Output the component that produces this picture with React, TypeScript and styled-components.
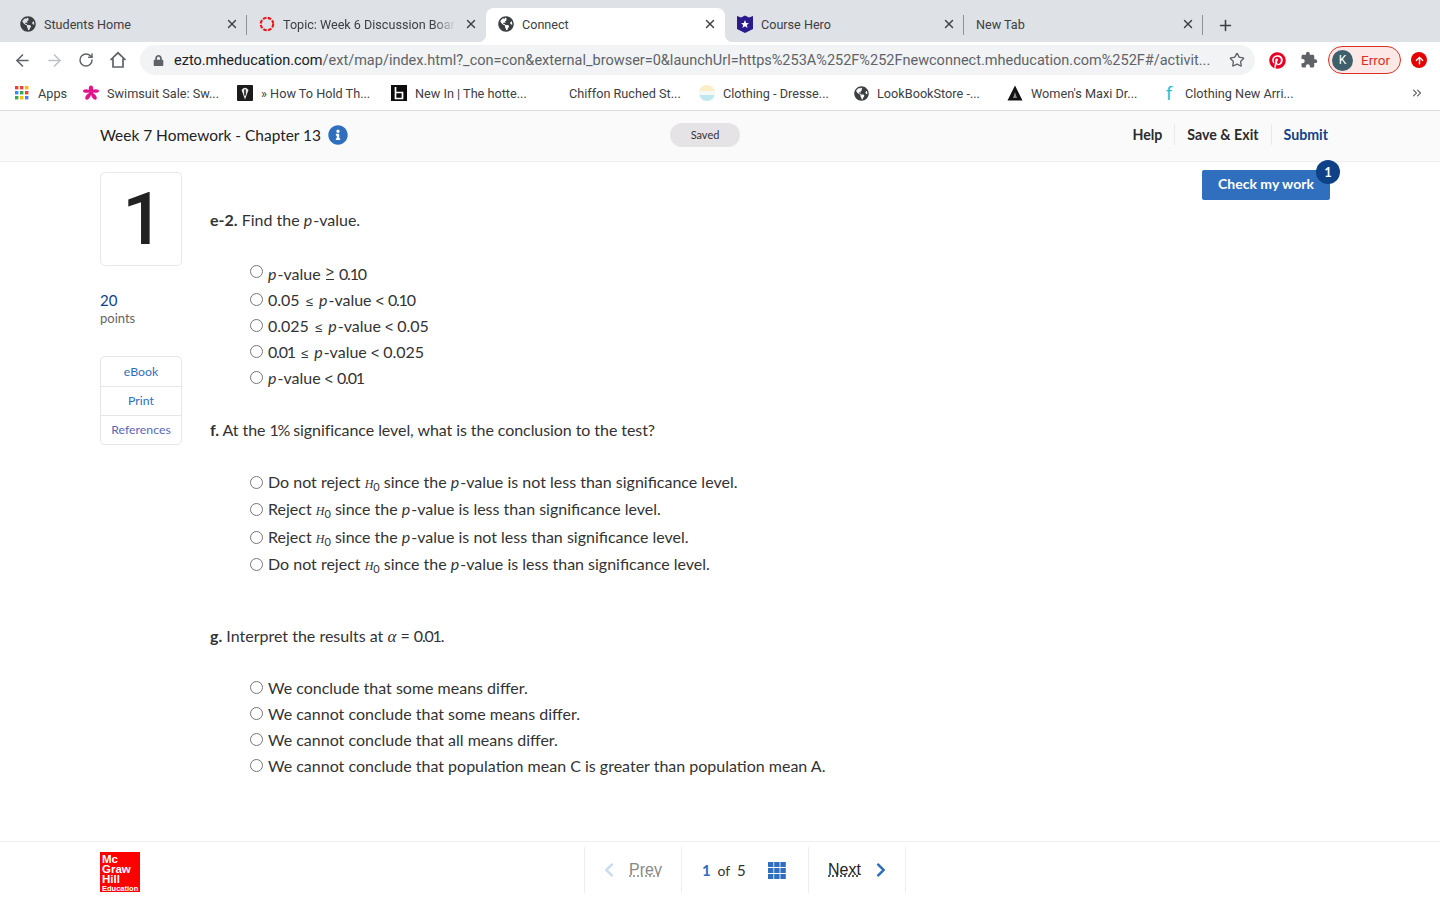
import React from 'react';
import styled, { createGlobalStyle } from 'styled-components';
import { ArrowLeft, ArrowRight, RotateCw, Star, X, Plus, ChevronsRight } from 'lucide-react';
import { FaGlobeAmericas, FaPinterest, FaLock, FaInfoCircle, FaChevronLeft, FaChevronRight, FaArrowUp } from 'react-icons/fa';
import { MdExtension } from 'react-icons/md';

const BODY_FONT = '"Lato", "Open Sans", sans-serif';
const CHROME_FONT = 'Roboto, "Liberation Sans", sans-serif';

const GlobalStyle = createGlobalStyle`
  html, body { margin: 0; padding: 0; background: #fff; overflow: hidden; }
  * { box-sizing: border-box; }
`;

// icons
function DashedRing() {
  return (
    <svg width="18" height="18" viewBox="0 0 18 18">
      <circle cx="9" cy="9" r="7" fill="none" stroke="#e8141c" strokeWidth="2.4" strokeDasharray="4 1.5" />
    </svg>
  );
}

function HeroShield() {
  return (
    <svg width="16" height="18" viewBox="0 0 16 18">
      <path d="M0 1 L4 2.5 L8 0.5 L12 2.5 L16 1 V14 L8 18 L0 14 Z" fill="#2a1a8c" />
      <path d="M8 5 L9.2 8 L12 8.2 L9.8 10 L10.6 13 L8 11.3 L5.4 13 L6.2 10 L4 8.2 L6.8 8 Z" fill="#fff" />
    </svg>
  );
}

function HomeOutline() {
  return (
    <svg width="18" height="18" viewBox="0 0 18 18" fill="none" stroke="#5f6368" strokeWidth="1.7">
      <path d="M1.5 9 L9 1.8 L16.5 9 M4 7.5 V16 H14 V7.5" />
    </svg>
  );
}

function AppsDots() {
  const colors = ['#ea4335', '#ea4335', '#fbbc04', '#4285f4', '#34a853', '#ea4335', '#34a853', '#fbbc04', '#4285f4'];
  return (
    <svg width="14" height="14" viewBox="0 0 14 14">
      {colors.map((color, i) => (
        <rect key={i} x={(i % 3) * 5} y={Math.floor(i / 3) * 5} width="3.4" height="3.4" fill={color} />
      ))}
    </svg>
  );
}

function PinkFlower() {
  return (
    <svg width="16" height="16" viewBox="0 0 16 16" fill="#e0148c">
      <ellipse cx="8" cy="4" rx="2.2" ry="3.4" />
      <ellipse cx="3.4" cy="6" rx="3.4" ry="1.8" />
      <ellipse cx="12.6" cy="6" rx="3.4" ry="1.8" />
      <ellipse cx="5" cy="11.5" rx="2" ry="3.6" transform="rotate(35 5 11.5)" />
      <ellipse cx="11" cy="11.5" rx="2" ry="3.6" transform="rotate(-35 11 11.5)" />
      <circle cx="8" cy="8" r="2.4" />
    </svg>
  );
}

function DarkBadge() {
  return (
    <svg width="16" height="16" viewBox="0 0 16 16">
      <rect width="16" height="16" rx="1" fill="#1b1b1b" />
      <path d="M4.5 5 Q8 0.5 11.5 5 L8 14.5 Z" fill="#e8e8e8" />
      <path d="M8 4.5 V10.5" stroke="#1b1b1b" strokeWidth="1.6" />
    </svg>
  );
}

function BlackB() {
  return (
    <svg width="16" height="16" viewBox="0 0 16 16">
      <rect width="16" height="16" fill="#0c0c0c" />
      <path d="M4.5 2 V13.5 H11.5 V7.5 H4.5" fill="none" stroke="#fff" strokeWidth="1.7" />
    </svg>
  );
}

function PastelDisc() {
  return (
    <svg width="16" height="16" viewBox="0 0 16 16">
      <clipPath id="disc">
        <circle cx="8" cy="8" r="8" />
      </clipPath>
      <g clipPath="url(#disc)">
        <rect width="16" height="6" fill="#fbeec6" />
        <rect y="6" width="16" height="4" fill="#f4f8f6" />
        <rect y="10" width="16" height="6" fill="#bfe8ee" />
      </g>
    </svg>
  );
}

function BlackTriangle() {
  return (
    <svg width="16" height="16" viewBox="0 0 16 16">
      <path d="M8 0.5 L15.5 15.5 H0.5 Z" fill="#111" />
      <path d="M8 7 L10 13 H6 Z" fill="#888" />
    </svg>
  );
}

function CyanMark() {
  return <CyanF>f</CyanF>;
}

function GridGlyph() {
  return (
    <svg width="18" height="17" viewBox="0 0 18 17" fill="#2f6fbd">
      {[0, 6, 12].flatMap((y) =>
        [0, 6.2, 12.4].map((x) => <rect key={`${x}-${y}`} x={x} y={y} width="5.4" height="5" />),
      )}
    </svg>
  );
}

// data
const TABS = [
  { title: 'Students Home', icon: <FaGlobeAmericas size={16} color="#3c4043" /> },
  { title: 'Topic: Week 6 Discussion Boar', icon: <DashedRing />, fade: true },
  { title: 'Connect', icon: <FaGlobeAmericas size={16} color="#3c4043" />, active: true },
  { title: 'Course Hero', icon: <HeroShield /> },
  { title: 'New Tab', icon: null },
];

const BOOKMARKS = [
  { title: 'Swimsuit Sale: Sw...', icon: <PinkFlower /> },
  { title: '» How To Hold Th...', icon: <DarkBadge /> },
  { title: 'New In | The hotte...', icon: <BlackB /> },
  { title: 'Chiffon Ruched St...', icon: null },
  { title: 'Clothing - Dresse...', icon: <PastelDisc /> },
  { title: 'LookBookStore -...', icon: <FaGlobeAmericas size={15} color="#3c4043" /> },
  { title: "Women's Maxi Dr...", icon: <BlackTriangle /> },
  { title: 'Clothing New Arri...', icon: <CyanMark /> },
];

function PVal() {
  return (
    <>
      <Italic>p</Italic>-value
    </>
  );
}

function H0() {
  return (
    <HNull>
      <i>H</i>
      <sub>0</sub>
    </HNull>
  );
}

function App() {
  return (
    <Page>
      <GlobalStyle />
      <TabStrip>
        {TABS.map((tab, i) => (
          <Tab key={tab.title} $active={tab.active} $divider={i !== 2 && i !== 1}>
            {tab.icon && <TabIcon>{tab.icon}</TabIcon>}
            <TabTitle $fade={tab.fade}>{tab.title}</TabTitle>
            <X size={14} strokeWidth={2.4} color="#3c4043" />
          </Tab>
        ))}
        <NewTabButton>
          <Plus size={17} strokeWidth={2.2} color="#3c4043" />
        </NewTabButton>
      </TabStrip>

      <Toolbar>
        <NavButtons>
          <ArrowLeft size={19} color="#5f6368" />
          <ArrowRight size={19} color="#bdc1c6" />
          <RotateCw size={16} color="#5f6368" strokeWidth={2.2} />
          <HomeOutline />
        </NavButtons>
        <AddressBar>
          <FaLock size={11} color="#5f6368" />
          <Url>
            <strong>ezto.mheducation.com</strong>/ext/map/index.html?_con=con&amp;external_browser=0&amp;launchUrl=https%253A%252F%252Fnewconnect.mheducation.com%252F#/activit...
          </Url>
          <Star size={16} color="#5f6368" />
        </AddressBar>
        <ExtensionRow>
          <FaPinterest size={17} color="#e60023" />
          <MdExtension size={18} color="#5f6368" />
          <ProfilePill>
            <Avatar>K</Avatar>
            Error
          </ProfilePill>
          <UploadDot>
            <FaArrowUp size={9} color="#fff" />
          </UploadDot>
        </ExtensionRow>
      </Toolbar>

      <BookmarkBar>
        <Bookmark $width={69}>
          <BookmarkIcon>
            <AppsDots />
          </BookmarkIcon>
          Apps
        </Bookmark>
        {BOOKMARKS.map((bookmark) => (
          <Bookmark key={bookmark.title} $width={154}>
            <BookmarkIcon>{bookmark.icon}</BookmarkIcon>
            {bookmark.title}
          </Bookmark>
        ))}
        <MoreBookmarks>
          <ChevronsRight size={14} color="#5f6368" />
        </MoreBookmarks>
      </BookmarkBar>

      <AssignmentHeader>
        <AssignmentTitle>
          Week 7 Homework - Chapter 13
          <FaInfoCircle size={20} color="#2f6fbd" />
        </AssignmentTitle>
        <SavedPill>Saved</SavedPill>
        <HeaderNav>
          <HeaderLink>Help</HeaderLink>
          <HeaderLink>Save &amp; Exit</HeaderLink>
          <HeaderLink $primary>Submit</HeaderLink>
        </HeaderNav>
      </AssignmentHeader>

      <Main>
        <Sidebar>
          <NumberCard>1</NumberCard>
          <Points>20</Points>
          <PointsLabel>points</PointsLabel>
          <ToolLinks>
            <ToolLink>eBook</ToolLink>
            <ToolLink>Print</ToolLink>
            <ToolLink $purple>References</ToolLink>
          </ToolLinks>
        </Sidebar>

        <Question>
          <Prompt $top={35}>
            <b>e-2.</b> Find the <PVal />.
          </Prompt>
          <Options $top={28}>
            <Option>
              <Radio $raised />
              <span>
                <PVal /> <GeSign>&gt;</GeSign> <Tight>0.10</Tight>
              </span>
            </Option>
            <Option>
              <Radio />
              <span>0.05 <Compare>≤</Compare> <PVal /> <Less>&lt;</Less> <Tight>0.10</Tight></span>
            </Option>
            <Option>
              <Radio />
              <span>0.025 <Compare>≤</Compare> <PVal /> <Less>&lt;</Less> 0.05</span>
            </Option>
            <Option>
              <Radio />
              <span><Tight>0.01</Tight> <Compare>≤</Compare> <PVal /> <Less>&lt;</Less> 0.025</span>
            </Option>
            <Option>
              <Radio />
              <span><PVal /> <Less>&lt;</Less> <Tight>0.01</Tight></span>
            </Option>
          </Options>

          <Prompt $top={26} $spacing={-0.07}>
            <b>f.</b> At the <Tight>1%</Tight> significance level, what is the conclusion to the test?
          </Prompt>
          <Options $top={26}>
            <Option $height={27.5}>
              <Radio />
              <span>Do not reject <H0 /> since the <PVal /> is not less than significance level.</span>
            </Option>
            <Option $height={27.5}>
              <Radio />
              <span>Reject <H0 /> since the <PVal /> is less than significance level.</span>
            </Option>
            <Option $height={27.5}>
              <Radio />
              <span>Reject <H0 /> since the <PVal /> is not less than significance level.</span>
            </Option>
            <Option $height={27.5}>
              <Radio />
              <span>Do not reject <H0 /> since the <PVal /> is less than significance level.</span>
            </Option>
          </Options>

          <Prompt $top={44}>
            <b>g.</b> Interpret the results at <Alpha>α</Alpha> = <Tight>0.01</Tight>.
          </Prompt>
          <Options $top={26}>
            <Option>
              <Radio />
              <span>We conclude that some means differ.</span>
            </Option>
            <Option>
              <Radio />
              <span>We cannot conclude that some means differ.</span>
            </Option>
            <Option>
              <Radio />
              <span>We cannot conclude that all means differ.</span>
            </Option>
            <Option>
              <Radio />
              <span>We cannot conclude that population mean C is greater than population mean A.</span>
            </Option>
          </Options>
        </Question>

        <CheckButton>
          Check my work
          <CheckBadge>1</CheckBadge>
        </CheckButton>
      </Main>

      <Footer>
        <Logo>
          Mc
          <br />
          Graw
          <br />
          Hill
          <LogoSmall>Education</LogoSmall>
        </Logo>
        <Pager>
          <PagerCell $width={97} $inset={16} $gap={12}>
            <FaChevronLeft size={16} color="#c9dcef" />
            <PagerLink $muted>Prev</PagerLink>
          </PagerCell>
          <PagerCell $width={127} $inset={20} $gap={22}>
            <PageCount>
              <b>1</b> <small>of</small> 5
            </PageCount>
            <GridGlyph />
          </PagerCell>
          <PagerCell $width={97} $inset={19} $gap={12}>
            <PagerLink>Next</PagerLink>
            <FaChevronRight size={16} color="#2f6fbd" />
          </PagerCell>
        </Pager>
      </Footer>
    </Page>
  );
}

const Page = styled.div`
  height: 900px;
  display: flex;
  flex-direction: column;
  font-family: ${BODY_FONT};
  color: #333;
`;

const TabStrip = styled.div`
  height: 42px;
  padding: 8px 0 0 8px;
  display: flex;
  background: #dee1e6;
  font-family: ${CHROME_FONT};
`;

const Tab = styled.div<{ $active?: boolean; $divider?: boolean }>`
  width: 239px;
  height: 34px;
  padding: 0 8px 2px 12px;
  display: flex;
  align-items: center;
  gap: 8px;
  font-size: 12.6px;
  color: #3c4043;
  border-radius: 8px 8px 0 0;
  background: ${(p) => (p.$active ? '#fff' : 'transparent')};
  position: relative;

  &::before {
    content: '';
    display: ${(p) => (p.$active ? 'block' : 'none')};
    position: absolute;
    left: -8px;
    right: -8px;
    bottom: 0;
    height: 8px;
    z-index: 0;
    background:
      radial-gradient(circle at 0 0, #dee1e6 8px, #fff 8.5px) left / 8px 8px no-repeat,
      radial-gradient(circle at 100% 0, #dee1e6 8px, #fff 8.5px) right / 8px 8px no-repeat;
  }

  &::after {
    content: '';
    display: ${(p) => (p.$divider ? 'block' : 'none')};
    position: absolute;
    right: 0;
    top: 7px;
    height: 20px;
    width: 1px;
    background: #8f9296;
  }
`;

const TabIcon = styled.span`
  width: 16px;
  height: 18px;
  display: flex;
  align-items: center;
  justify-content: center;
`;

const TabTitle = styled.span<{ $fade?: boolean }>`
  flex: 1;
  white-space: nowrap;
  ${(p) => p.$fade && 'mask-image: linear-gradient(to right, #000 150px, transparent 173px);'}
`;

const NewTabButton = styled.div`
  width: 44px;
  height: 34px;
  display: flex;
  align-items: center;
  justify-content: center;
`;

const Toolbar = styled.div`
  height: 36px;
  display: flex;
  align-items: center;
  background: #fff;
  font-family: ${CHROME_FONT};
`;

const NavButtons = styled.div`
  width: 134px;
  padding-left: 6px;
  display: grid;
  grid-template-columns: repeat(4, 32px);
  justify-items: center;
  align-items: center;
`;

const AddressBar = styled.div`
  width: 1115px;
  height: 30px;
  margin-left: 6px;
  padding: 0 10px 0 13px;
  display: flex;
  align-items: center;
  background: #f1f3f4;
  border-radius: 15px;
`;

const Url = styled.div`
  flex: 1;
  margin-left: 10px;
  font-size: 14.5px;
  white-space: nowrap;
  overflow: hidden;
  color: #5f6368;

  strong {
    font-weight: 400;
    color: #202124;
  }
`;

const ExtensionRow = styled.div`
  margin-left: 14px;
  display: flex;
  align-items: center;
  gap: 14px;
`;

const ProfilePill = styled.div`
  width: 73px;
  height: 28px;
  margin-left: -4px;
  padding-left: 3px;
  display: flex;
  align-items: center;
  gap: 8px;
  color: #d93025;
  font-size: 13.5px;
  background: #fce8e6;
  border: 1px solid #d93025;
  border-radius: 14px;
`;

const Avatar = styled.span`
  width: 21px;
  height: 21px;
  display: flex;
  align-items: center;
  justify-content: center;
  border-radius: 50%;
  background: #3f5f6d;
  color: #fff;
  font-size: 12px;
`;

const UploadDot = styled.span`
  width: 16px;
  height: 16px;
  margin-left: -4px;
  display: flex;
  align-items: center;
  justify-content: center;
  border-radius: 50%;
  background: #e60000;
`;

const BookmarkBar = styled.div`
  height: 33px;
  padding: 0 0 2px 14px;
  display: flex;
  align-items: center;
  background: #fff;
  border-bottom: 1px solid #d8dadd;
  font-family: ${CHROME_FONT};
`;

const Bookmark = styled.div<{ $width: number }>`
  width: ${(p) => p.$width}px;
  display: flex;
  align-items: center;
  gap: 8px;
  font-size: 12.7px;
  color: #3c4043;
  white-space: nowrap;
`;

const BookmarkIcon = styled.span`
  width: 16px;
  height: 16px;
  display: flex;
  align-items: center;
  justify-content: center;
`;

const CyanF = styled.span`
  font: 400 19px Roboto, sans-serif;
  color: #1cc3d6;
`;

const MoreBookmarks = styled.div`
  margin-left: auto;
  margin-right: 16px;
  display: flex;
`;

const AssignmentHeader = styled.header`
  height: 51px;
  padding: 0 112px 3px 100px;
  display: grid;
  grid-template-columns: 570px 70px 1fr;
  align-items: center;
  background: #fafafa;
  border-bottom: 1px solid #eee;
`;

const AssignmentTitle = styled.h1`
  margin: 0;
  display: flex;
  align-items: center;
  gap: 7px;
  font-size: 15.45px;
  font-weight: 400;
  color: #222;
  white-space: nowrap;
`;

const SavedPill = styled.div`
  height: 24px;
  padding-bottom: 1px;
  display: flex;
  align-items: center;
  justify-content: center;
  font-size: 11px;
  color: #333;
  background: #e6e3e6;
  border-radius: 12px;
`;

const HeaderNav = styled.nav`
  display: flex;
  justify-content: flex-end;
`;

const HeaderLink = styled.a<{ $primary?: boolean }>`
  padding: 2px 12px;
  font-size: 14.2px;
  font-weight: 700;
  color: ${(p) => (p.$primary ? '#12418a' : '#2b2b2b')};
  border-left: 1px solid #eaeaea;

  &:first-child {
    border-left: 0;
  }

  &:last-child {
    padding-right: 0;
  }
`;

const Main = styled.main`
  flex: 1;
  padding: 10px 110px 0 100px;
  display: flex;
  align-items: flex-start;
  background: #fff;
`;

const Sidebar = styled.aside`
  width: 82px;
  margin-right: 28px;
  flex-shrink: 0;
`;

const NumberCard = styled.div`
  height: 94px;
  padding-left: 4px;
  display: flex;
  align-items: center;
  justify-content: center;
  font-family: Roboto, sans-serif;
  font-size: 73px;
  font-weight: 500;
  color: #222;
  border: 1px solid #e8e8e8;
  border-radius: 5px;
`;

const Points = styled.div`
  margin-top: 25px;
  font-size: 15px;
  line-height: 18px;
  color: #12418a;
`;

const PointsLabel = styled.div`
  margin-top: 1px;
  font-size: 13px;
  line-height: 16px;
  color: #666;
`;

const ToolLinks = styled.div`
  margin-top: 30px;
  border: 1px solid #e6e6e6;
  border-radius: 5px;
`;

const ToolLink = styled.div<{ $purple?: boolean }>`
  height: 29px;
  padding-bottom: 1px;
  display: flex;
  align-items: center;
  justify-content: center;
  font-size: 12.3px;
  color: ${(p) => (p.$purple ? '#5a68b8' : '#2f6fbd')};
  border-top: 1px solid #e6e6e6;

  &:first-child {
    border-top: 0;
  }
`;

const Question = styled.section`
  flex: 1;
  font-size: 16px;
  color: #333;
`;

const Prompt = styled.p<{ $top: number; $spacing?: number }>`
  margin: ${(p) => p.$top}px 0 0;
  line-height: 26px;
  height: 26px;
  letter-spacing: ${(p) => p.$spacing ?? 0}px;

  b {
    font-weight: 700;
  }
`;

const Options = styled.div<{ $top: number }>`
  margin-top: ${(p) => p.$top}px;
  padding-left: 40px;
`;

const Option = styled.label<{ $height?: number }>`
  height: ${(p) => p.$height ?? 26}px;
  display: flex;
  align-items: center;
  gap: 5px;
  white-space: nowrap;

  > span {
    margin-top: -2px;
  }
`;

const Radio = styled.input.attrs({ type: 'radio' })<{ $raised?: boolean }>`
  width: 13px;
  height: 13px;
  margin: 0 0 ${(p) => (p.$raised ? 5 : 1)}px;
  appearance: none;
  background: #fff;
  border: 1px solid #767676;
  border-radius: 50%;
`;

const Italic = styled.i`
  font-style: italic;
  padding-right: 1px;
`;

const Tight = styled.span`
  letter-spacing: -1.2px;
`;

const Compare = styled.span`
  margin: 0 2px;
  font-family: "Liberation Sans", sans-serif;
  font-size: 13px;
`;

const Less = styled.span`
  font-family: "Liberation Sans", sans-serif;
  font-size: 14px;
`;

const GeSign = styled.span`
  display: inline-block;
  margin: 0 1px;
  padding-bottom: 1px;
  font-family: "Liberation Sans", sans-serif;
  font-size: 14px;
  line-height: 11px;
  border-bottom: 1px solid #333;
  vertical-align: 3px;
`;

const HNull = styled.span`
  font-family: "Liberation Serif", serif;
  font-size: 12px;

  sub {
    font-family: ${BODY_FONT};
    font-size: 11px;
    line-height: 0;
  }
`;

const Alpha = styled.i`
  font-family: "Liberation Serif", serif;
  font-size: 17px;
`;

const CheckButton = styled.button`
  width: 128px;
  height: 30px;
  margin-top: -2px;
  padding: 0 0 3px;
  position: relative;
  font-family: ${BODY_FONT};
  font-size: 14px;
  font-weight: 700;
  color: #fff;
  background: #2f6fbd;
  border: 0;
  border-radius: 2px;
`;

const CheckBadge = styled.span`
  position: absolute;
  top: -10px;
  right: -10px;
  width: 24px;
  height: 24px;
  display: flex;
  align-items: center;
  justify-content: center;
  font-size: 13px;
  background: #0f4187;
  border-radius: 50%;
`;

const Footer = styled.footer`
  height: 59px;
  padding: 5px 0 0 100px;
  display: flex;
  border-top: 1px solid #eee;
  background: #fff;
`;

const Logo = styled.div`
  width: 40px;
  height: 40px;
  margin-top: 5px;
  padding: 2px 2px;
  background: #f00;
  color: #fff;
  font: 700 11.5px/10px "Liberation Sans", sans-serif;
`;

const LogoSmall = styled.div`
  font-size: 7.5px;
  line-height: 9px;
`;

const Pager = styled.div`
  height: 46px;
  margin-left: 444px;
  display: flex;
  border-left: 1px solid #eee;
`;

const PagerCell = styled.div<{ $width: number; $inset: number; $gap: number }>`
  width: ${(p) => p.$width}px;
  padding-left: ${(p) => p.$inset}px;
  display: flex;
  align-items: center;
  gap: ${(p) => p.$gap}px;
  border-right: 1px solid #eee;
`;

const PagerLink = styled.a<{ $muted?: boolean }>`
  font-family: "Liberation Sans", sans-serif;
  font-size: 16px;
  color: ${(p) => (p.$muted ? '#888' : '#222')};
  text-decoration: underline dotted;
`;

const PageCount = styled.span`
  font-size: 15px;
  color: #333;

  b {
    color: #2f6fbd;
  }

  small {
    font-size: 14px;
    margin: 0 3px;
  }
`;

export default App;
